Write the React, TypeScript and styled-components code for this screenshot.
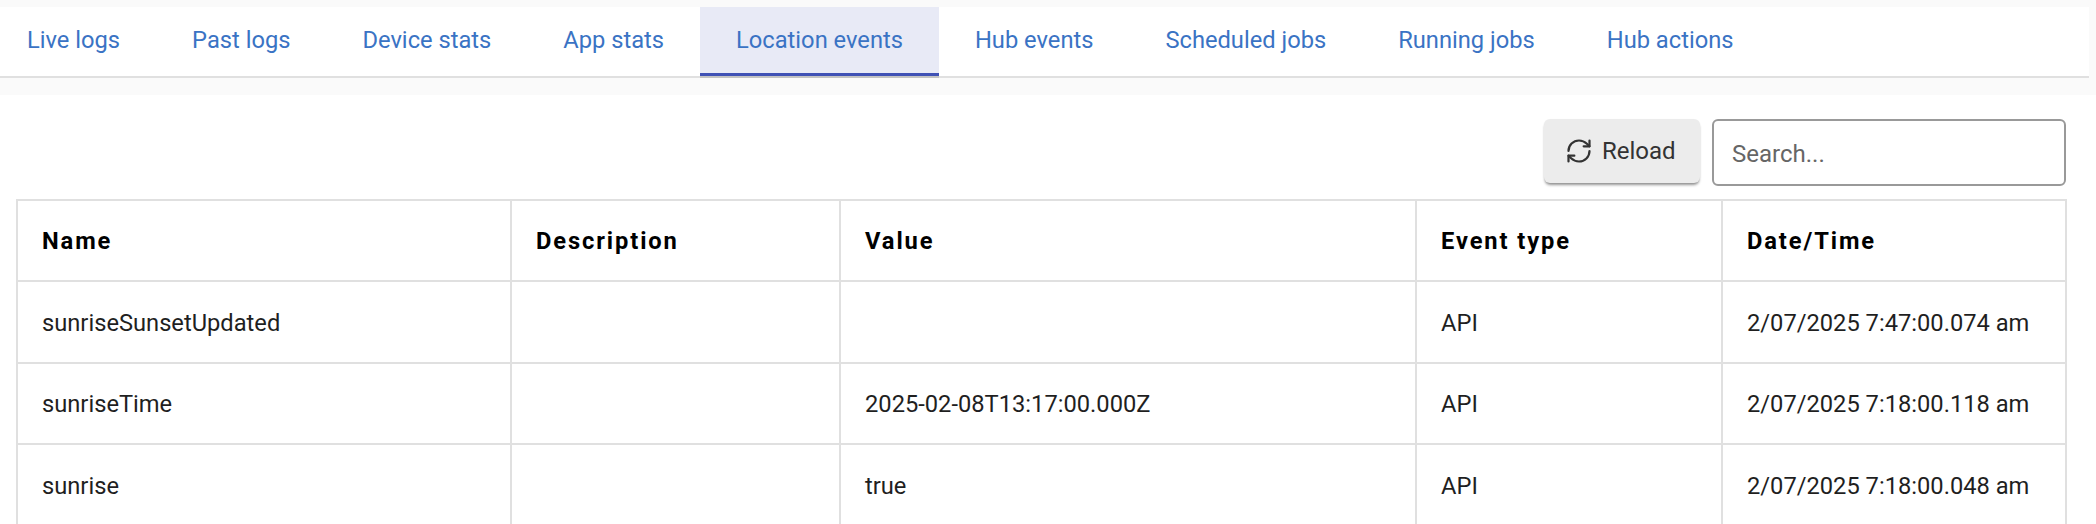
import React from 'react';
import styled, { createGlobalStyle } from 'styled-components';
import { RefreshCw } from 'lucide-react';

const GlobalStyle = createGlobalStyle`
  html, body {
    margin: 0;
    background: #ffffff;
    overflow: hidden;
  }
  body {
    font-family: Roboto, "Liberation Sans", sans-serif;
  }
`;

const Page = styled.div`
  width: 2096px;
  height: 524px;
  overflow: hidden;
`;

const TabBand = styled.div`
  background: #fafafa;
  padding: 7px 7px 17px 0;
`;

const TabBar = styled.nav`
  display: flex;
  height: 69px;
  background: #ffffff;
  border-bottom: 2px solid #e0e0e0;
`;

const Tab = styled.a<{ $active?: boolean }>`
  display: flex;
  align-items: center;
  box-sizing: border-box;
  height: 69px;
  padding: 0 36px ${(p) => (p.$active ? '1px' : '4px')};
  font-size: 23.7px;
  color: #3a73c4;
  background: ${(p) => (p.$active ? '#e8eaf6' : 'transparent')};
  border-bottom: ${(p) => (p.$active ? '3px solid #3f51b5' : 'none')};
  box-shadow: ${(p) => (p.$active ? '0 2px 0 #c2c2c2' : 'none')};

  &:first-child {
    padding-left: 27px;
  }
`;

const Content = styled.main`
  padding: 24px 30px 0 16px;
`;

const Toolbar = styled.div`
  display: flex;
  justify-content: flex-end;
  gap: 12px;
  margin-bottom: 13px;
`;

const ReloadButton = styled.button`
  display: flex;
  align-items: center;
  gap: 9px;
  width: 156px;
  height: 64px;
  padding: 0 0 0 21px;
  border: none;
  border-radius: 6px;
  background: #ececec;
  color: #333333;
  font: 400 24px Roboto, sans-serif;
  box-shadow: 0 3px 3px -1px rgba(0, 0, 0, 0.4), 0 1px 2px rgba(0, 0, 0, 0.08);
`;

const SearchInput = styled.input`
  box-sizing: border-box;
  width: 354px;
  height: 67px;
  padding: 2px 18px 0;
  border: 2px solid #999999;
  border-radius: 6px;
  font: 400 24px Roboto, sans-serif;
  color: #333333;
  outline: none;

  &::placeholder {
    color: #666666;
    opacity: 1;
  }
`;

const Table = styled.table`
  box-sizing: border-box;
  width: 2049px;
  border-collapse: collapse;
  table-layout: fixed;
`;

const Cell = styled.td`
  box-sizing: border-box;
  height: 81.33px;
  padding: 2px 24px 0;
  border: 2px solid #e0e0e0;
  font-size: 23.7px;
  color: #1f1f1f;
`;

const HeadCell = styled(Cell).attrs({ as: 'th' })`
  padding-top: 0;
  font-weight: 700;
  text-align: left;
  letter-spacing: 1.9px;
  color: #000000;
`;

const tabs = [
  'Live logs',
  'Past logs',
  'Device stats',
  'App stats',
  'Location events',
  'Hub events',
  'Scheduled jobs',
  'Running jobs',
  'Hub actions',
];

const columns = [
  { label: 'Name', width: 494 },
  { label: 'Description', width: 329 },
  { label: 'Value', width: 576 },
  { label: 'Event type', width: 306 },
  { label: 'Date/Time', width: 344 },
];

const rows = [
  ['sunriseSunsetUpdated', '', '', 'API', '2/07/2025 7:47:00.074 am'],
  ['sunriseTime', '', '2025-02-08T13:17:00.000Z', 'API', '2/07/2025 7:18:00.118 am'],
  ['sunrise', '', 'true', 'API', '2/07/2025 7:18:00.048 am'],
];

export default function App() {
  return (
    <Page>
      <GlobalStyle />
      <TabBand>
        <TabBar>
          {tabs.map((tab) => (
            <Tab key={tab} $active={tab === 'Location events'}>
              {tab}
            </Tab>
          ))}
        </TabBar>
      </TabBand>
      <Content>
        <Toolbar>
          <ReloadButton>
            <RefreshCw size={28} strokeWidth={1.9} />
            Reload
          </ReloadButton>
          <SearchInput placeholder="Search..." />
        </Toolbar>
        <Table>
          <colgroup>
            {columns.map((col) => (
              <col key={col.label} width={col.width} />
            ))}
          </colgroup>
          <thead>
            <tr>
              {columns.map((col) => (
                <HeadCell key={col.label}>{col.label}</HeadCell>
              ))}
            </tr>
          </thead>
          <tbody>
            {rows.map((row) => (
              <tr key={row[0]}>
                {row.map((value, i) => (
                  <Cell key={i}>{value}</Cell>
                ))}
              </tr>
            ))}
          </tbody>
        </Table>
      </Content>
    </Page>
  );
}
